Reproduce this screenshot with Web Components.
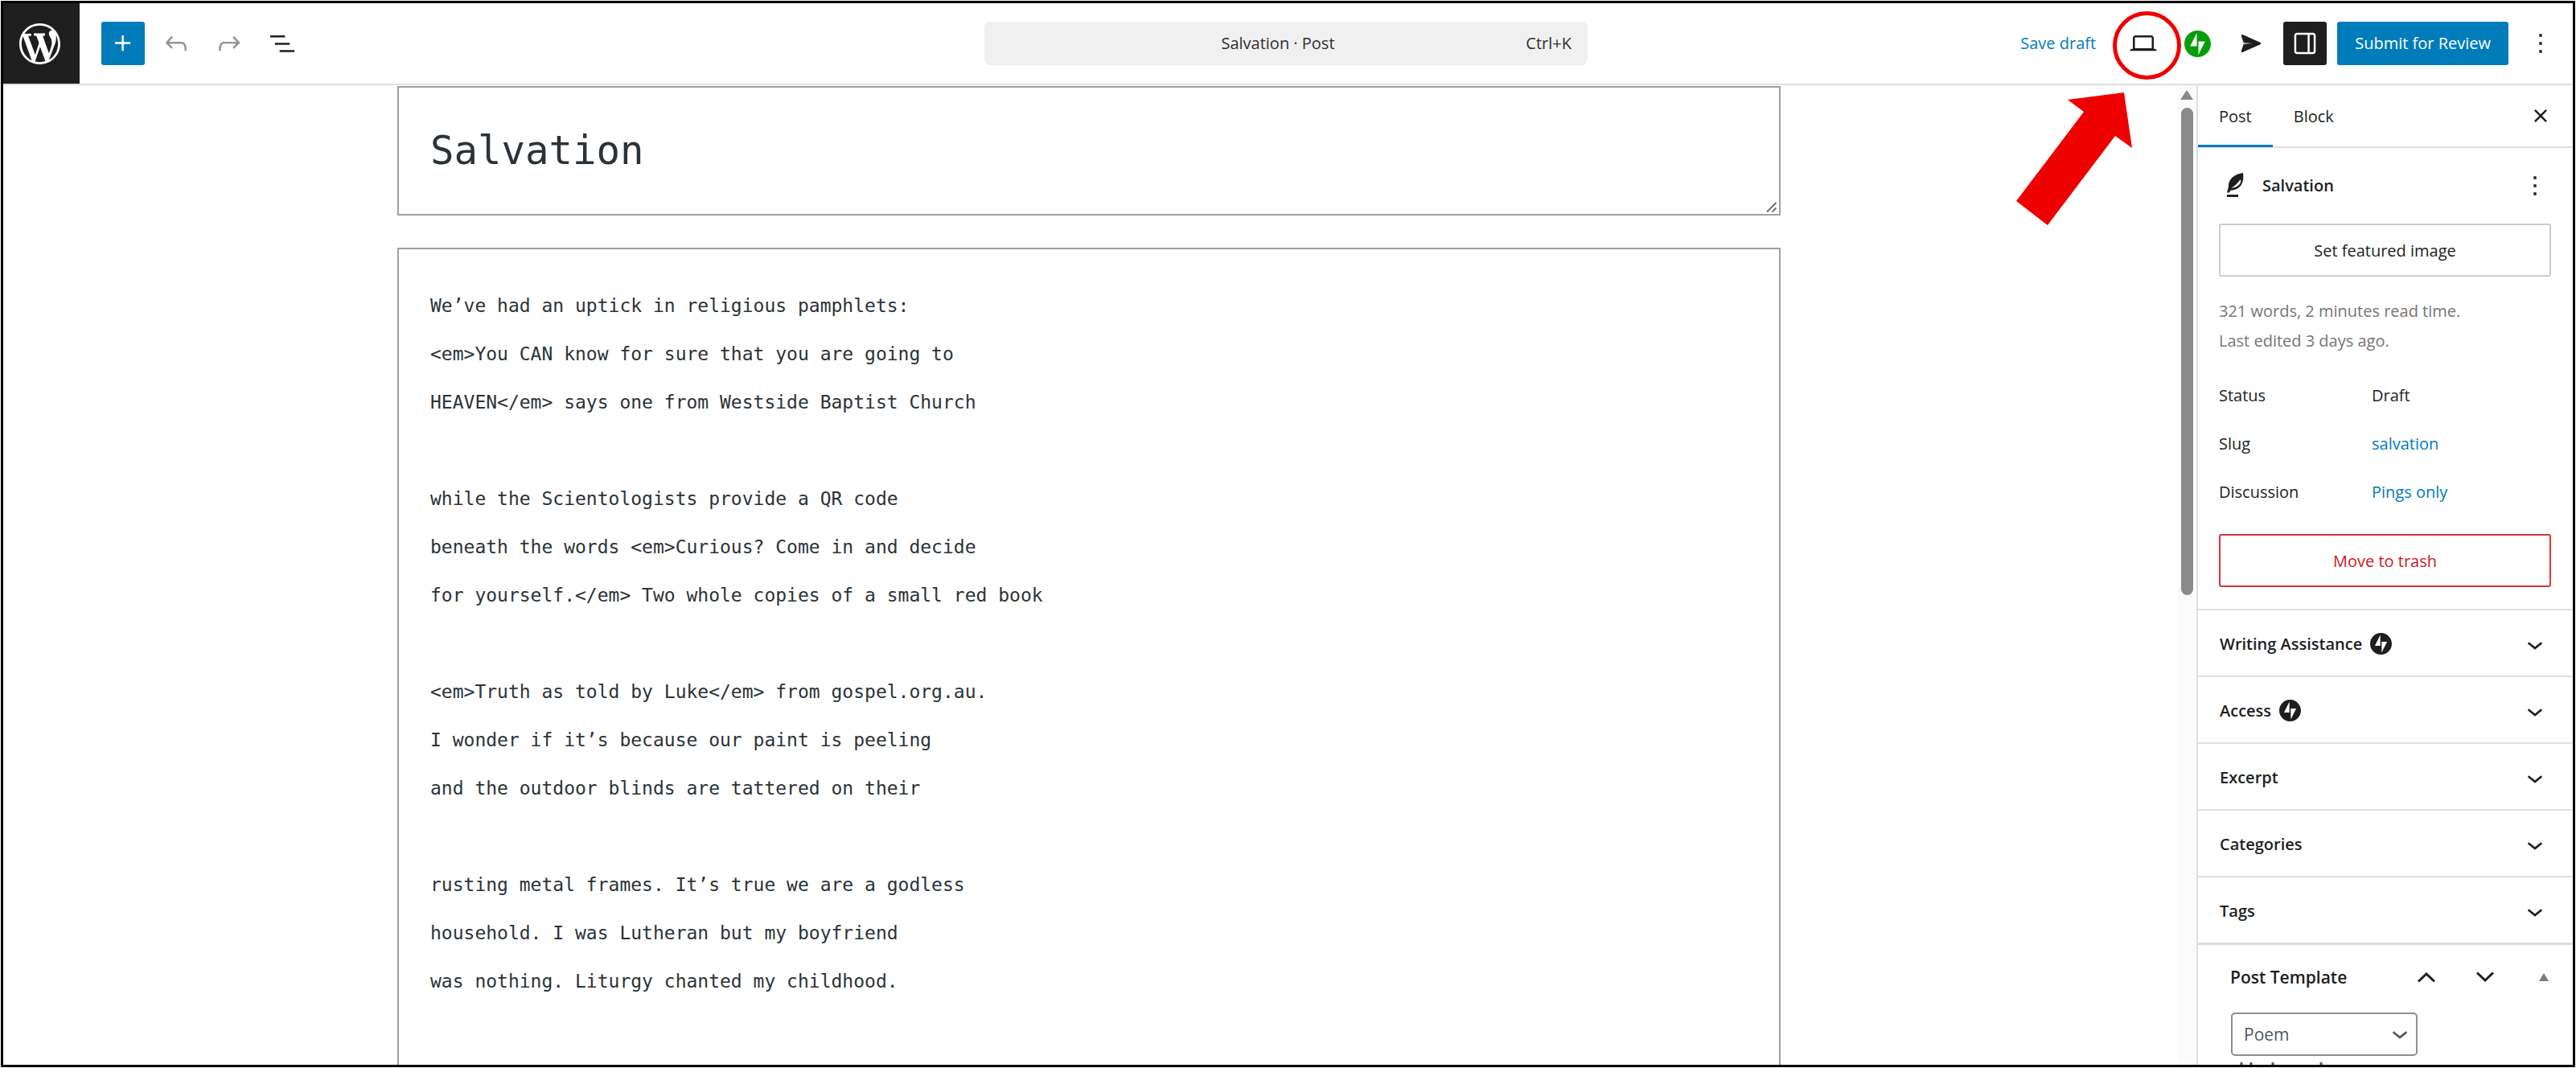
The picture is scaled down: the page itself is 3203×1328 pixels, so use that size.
<!DOCTYPE html>
<html lang="en">
<head>
<meta charset="utf-8">
<title>Salvation - Post</title>
<style>
	html, body {
		margin: 0;
		height: 100%;
		background: #fff;
	}

	body {
		box-sizing: border-box;
		padding: 1px;
		overflow: hidden;
		font-family: "Segoe UI", "Open Sans", "Noto Sans", sans-serif;
		font-size: 20px;
		line-height: 28px;
		color: #1e1e1e;
		--blue: #007cba;
		--line: #e0e0e0;
	}
</style>
</head>
<body>
<post-editor></post-editor>

<script>
const ICONS = {
	wordpress: ["0 0 20 20", `<path d="M20 10c0-5.51-4.49-10-10-10C4.48 0 0 4.49 0 10c0 5.52 4.48 10 10 10 5.51 0 10-4.48 10-10zM7.78 15.37L4.37 6.22c.55-.02 1.17-.08 1.17-.08.5-.06.44-1.13-.06-1.11 0 0-1.45.11-2.37.11-.18 0-.37 0-.58-.01C4.12 2.69 6.87 1.11 10 1.11c2.33 0 4.45.87 6.05 2.34-.68-.11-1.65.39-1.65 1.58 0 .74.45 1.36.9 2.1.35.61.55 1.36.55 2.46 0 1.49-1.4 5-1.4 5l-3.03-8.37c.54-.02.82-.17.82-.17.5-.05.44-1.25-.06-1.22 0 0-1.44.12-2.38.12-.87 0-2.33-.12-2.33-.12-.5-.03-.56 1.2-.06 1.22l.92.08 1.26 3.41zM17.41 10c.24-.64.74-1.87.43-4.25.7 1.29 1.05 2.71 1.05 4.25 0 3.29-1.73 6.24-4.4 7.78.97-2.59 1.94-5.2 2.92-7.78zM6.1 18.09C3.12 16.65 1.11 13.53 1.11 10c0-1.3.23-2.48.72-3.59C3.25 10.3 4.67 14.2 6.1 18.09zm4.03-6.63l2.58 6.98c-.86.29-1.76.45-2.71.45-.79 0-1.57-.11-2.29-.33.81-2.38 1.62-4.74 2.42-7.1z"/>`],
	plus: ["0 0 24 24", `<path d="M11 12.5V17.5H12.5V12.5H17.5V11H12.5V6H11V11H6V12.5H11Z"/>`],
	undo: ["0 0 24 24", `<path d="M18.3 11.7c-.6-.6-1.4-.9-2.3-.9H6.7l2.9-3.3-1.1-1-4.5 5L8.5 16l1-1-2.7-2.7H16c.5 0 .9.2 1.3.5 1 1 1 3.4 1 4.5v.3h1.5v-.2c0-1.5 0-4.3-1.5-5.7z"/>`],
	redo: ["0 0 24 24", `<path d="M15.6 6.5l-1.1 1 2.9 3.3H8c-.9 0-1.7.3-2.3.9-1.4 1.5-1.4 4.2-1.4 5.6v.2h1.5v-.3c0-1.1 0-3.5 1-4.5.3-.3.7-.5 1.3-.5h9.2L14.5 15l1.1 1.1 4.6-4.6-4.6-5z"/>`],
	list: ["0 0 24 24", `<path d="M3 6h11v1.5H3V6Zm3.5 5.5h11V13h-11v-1.5ZM21 17H10v1.5h11V17Z"/>`],
	desktop: ["0 0 24 24", `<path d="M20.5 16h-.7V8c0-1.1-.9-2-2-2H6.2c-1.1 0-2 .9-2 2v8h-.7c-.8 0-1.5.7-1.5 1.5h20c0-.8-.7-1.5-1.5-1.5zM5.7 8c0-.3.2-.5.5-.5h11.6c.3 0 .5.2.5.5v7.6H5.7V8z"/>`],
	jetpack: ["0 0 32 32", `<path d="M16 0C7.2 0 0 7.2 0 16s7.2 16 16 16 16-7.2 16-16S24.8 0 16 0zM15 19H7l8-16V19zM17 29V13h8L17 29z"/>`],
	send: ["0 0 24 24", `<defs><linearGradient id="g"><stop offset="0" stop-color="#bbb"/><stop offset="1" stop-color="#1e1e1e"/></linearGradient></defs><path d="M4.7 6.3Q4.6 5 6 5.5L18.8 11.2Q19.9 12 18.8 12.8L6 18.4Q4.6 19 4.7 17.7L6.6 12Z"/><path fill="url(#g)" d="M6.4 11.2L15 12L6.4 12.8Z"/>`],
	drawer: ["0 0 24 24", `<path d="M18 4H6c-1.1 0-2 .9-2 2v12c0 1.1.9 2 2 2h12c1.1 0 2-.9 2-2V6c0-1.1-.9-2-2-2zm-4 14.5H6c-.3 0-.5-.2-.5-.5V6c0-.3.2-.5.5-.5h8v13zm4.5-.5c0 .3-.2.5-.5.5h-2.5v-13H18c.3 0 .5.2.5.5v12z"/>`],
	more: ["0 0 24 24", `<path d="M13 19h-2v-2h2v2zm0-6h-2v-2h2v2zm0-6h-2V5h2v2z"/>`],
	close: ["0 0 24 24", `<path d="M12 13.06l3.712 3.713 1.061-1.06L13.061 12l3.712-3.712-1.06-1.06L12 10.938 8.288 7.227l-1.061 1.06L10.939 12l-3.712 3.712 1.06 1.061L12 13.061z"/>`],
	chevron: ["0 0 24 24", `<path d="M17.5 11.6L12 16l-5.5-4.4.9-1.2L12 14l4.5-3.6 1 1.2z"/>`],
	feather: ["0 0 40 40", `<path fill-rule="evenodd" d="M30 4C20 5 11 12 12 21L10 28.500H12.500L15 25.500C25 25.500 32 18 30 4ZM27 12C28.500 18 22 22.500 15.500 22.800C19 21 24 16 27 12Z"/><path d="M10 31h14v3H10z"/>`],
	up: ["0 0 24 14", `<path d="M2 12.500L12 3l10 9.500" fill="none" stroke="currentColor" stroke-width="3"/>`],
	down: ["0 0 24 14", `<path d="M2 1.500L12 11l10-9.500" fill="none" stroke="currentColor" stroke-width="3"/>`],
	triangle: ["0 0 14 12", `<path d="M7 1l6 10H1z"/>`],
	grip: ["0 0 14 14", `<path d="M1 12.500L12.500 1M7.500 12.500l5-5" fill="none" stroke="currentColor" stroke-width="2"/>`]
};

const POEM = `We’ve had an uptick in religious pamphlets:
<em>You CAN know for sure that you are going to
HEAVEN</em> says one from Westside Baptist Church

while the Scientologists provide a QR code
beneath the words <em>Curious? Come in and decide
for yourself.</em> Two whole copies of a small red book

<em>Truth as told by Luke</em> from gospel.org.au.
I wonder if it’s because our paint is peeling
and the outdoor blinds are tattered on their

rusting metal frames. It’s true we are a godless
household. I was Lutheran but my boyfriend
was nothing. Liturgy chanted my childhood.`;

class WpIcon extends HTMLElement {
	constructor() {
		super();
		this.attachShadow({ mode: "open" });
	}

	connectedCallback() {
		const [viewBox, shape] = ICONS[this.getAttribute("name")];
		this.shadowRoot.innerHTML = `
			<style>
				:host { display: block; width: 40px; height: 40px; flex: none; }
				svg { display: block; width: 100%; height: 100%; fill: currentColor; }
			</style>
			<svg viewBox="${viewBox}" aria-hidden="true">${shape}</svg>
		`;
	}
}

class IconButton extends HTMLElement {
	constructor() {
		super();
		this.attachShadow({ mode: "open" });
	}

	connectedCallback() {
		this.shadowRoot.innerHTML = `
			<style>
				:host { display: block; flex: none; }
				button {
					display: flex;
					align-items: center;
					justify-content: center;
					width: 54px;
					height: 54px;
					padding: 0;
					border: 0;
					border-radius: 3px;
					background: none;
					color: inherit;
				}
				:host([variant="primary"]) button { background: var(--blue); color: #fff; }
				:host([variant="pressed"]) button { background: #1e1e1e; color: #fff; }
				:host([disabled]) button { color: #949494; }
				:host([variant="brand"]) wp-icon { width: 33px; height: 33px; color: #069e08; }
				:host([variant="compact"]) button { width: 40px; }
				:host([variant="order"]) button { width: 73px; }
				:host([variant="order"]) wp-icon { width: 24px; height: 14px; }
				:host([variant="toggle"]) button { width: 73px; color: #787c82; }
				:host([variant="toggle"]) wp-icon { width: 14px; height: 12px; }
			</style>
			<button type="button" aria-label="${this.getAttribute("label")}"${this.hasAttribute("disabled") ? " disabled" : ""}>
				<wp-icon name="${this.getAttribute("icon")}"></wp-icon>
			</button>
		`;
	}
}

class EditorHeader extends HTMLElement {
	constructor() {
		super();
		this.attachShadow({ mode: "open" });
		this.shadowRoot.innerHTML = `
			<style>
				:host {
					display: grid;
					grid-template-columns: 1fr 750px 1fr;
					align-items: center;
					height: 100px;
					padding-right: 5px;
					border-bottom: 2px solid var(--line);
				}
				.left, .right { display: flex; align-items: center; }
				.left { gap: 12px; }
				.right { gap: 13px; justify-content: flex-end; padding-right: 8px; }
				.logo {
					display: flex;
					align-items: center;
					box-sizing: border-box;
					width: 95px;
					height: 100px;
					margin-right: 15px;
					padding-left: 20px;
					background: #1e1e1e;
					color: #fff;
				}
				.logo wp-icon { width: 51px; height: 51px; }
				button { font: inherit; border: 0; height: 54px; }
				.command {
					display: grid;
					grid-template-columns: 1fr auto 1fr;
					align-items: center;
					padding: 0 20px 0 0;
					border-radius: 7px;
					background: #f0f0f0;
					color: #2f2f2f;
				}
				.command .title { grid-column: 2; }
				.command .keys { text-align: right; }
				.save { padding: 0 19px; background: none; color: var(--blue); }
				.submit {
					padding: 0 22px;
					border-radius: 3px;
					background: var(--blue);
					color: #fff;
				}
			</style>
			<div class="left">
				<a class="logo" href="#" aria-label="View Posts"><wp-icon name="wordpress"></wp-icon></a>
				<icon-button icon="plus" label="Toggle block inserter" variant="primary"></icon-button>
				<icon-button icon="undo" label="Undo" disabled></icon-button>
				<icon-button icon="redo" label="Redo" disabled></icon-button>
				<icon-button icon="list" label="Document Overview"></icon-button>
			</div>
			<button class="command" type="button">
				<span class="title">Salvation · Post</span>
				<span class="keys">Ctrl+K</span>
			</button>
			<div class="right">
				<button class="save" type="button">Save draft</button>
				<icon-button icon="desktop" label="View"></icon-button>
				<icon-button icon="jetpack" label="Jetpack" variant="brand"></icon-button>
				<icon-button icon="send" label="Newsletter"></icon-button>
				<icon-button icon="drawer" label="Settings" variant="pressed"></icon-button>
				<button class="submit" type="button">Submit for Review</button>
				<icon-button icon="more" label="Options"></icon-button>
			</div>
		`;
	}
}

class CodeCanvas extends HTMLElement {
	constructor() {
		super();
		this.attachShadow({ mode: "open" });
		this.shadowRoot.innerHTML = `
			<style>
				:host { display: flex; flex: 1; min-width: 0; overflow: hidden; }
				.page { flex: 1; min-width: 0; padding: 1px 3px 0 0; }
				.column {
					display: flex;
					flex-direction: column;
					gap: 40px;
					max-width: 1720px;
					margin: 0 auto;
				}
				.field { position: relative; display: flex; }
				textarea {
					box-sizing: border-box;
					width: 100%;
					margin: 0;
					padding: 40px 39px;
					border: 2px solid #a0a0a0;
					border-radius: 0;
					resize: none;
					overflow: hidden;
					outline: none;
					background: #fff;
					color: #2c3338;
					font-family: Consolas, "DejaVu Sans Mono", monospace;
				}
				.title { height: 161px; font-size: 49px; line-height: 78px; }
				.body { font-size: 23px; line-height: 60px; }
				wp-icon {
					position: absolute;
					right: 4px;
					bottom: 3px;
					width: 14px;
					height: 14px;
					color: #707070;
				}
				.scrollbar {
					display: flex;
					flex-direction: column;
					align-items: center;
					gap: 10px;
					width: 24px;
					padding-top: 6px;
					background: #fbfbfb;
				}
				.arrow {
					width: 16px;
					height: 12px;
					background: #8a8a8a;
					clip-path: polygon(50% 0, 100% 100%, 0 100%);
				}
				.thumb { width: 15px; height: 50%; border-radius: 8px; background: #8a8a8a; }
			</style>
			<div class="page">
				<div class="column">
					<div class="field">
						<textarea class="title" rows="1" aria-label="Add title"></textarea>
						<wp-icon name="grip"></wp-icon>
					</div>
					<div class="field">
						<textarea class="body" rows="18" spellcheck="false" aria-label="Type text or HTML"></textarea>
					</div>
				</div>
			</div>
			<div class="scrollbar"><div class="arrow"></div><div class="thumb"></div></div>
		`;
		this.shadowRoot.querySelector(".title").textContent = "Salvation";
		this.shadowRoot.querySelector(".body").textContent = POEM;
	}
}

class PanelRow extends HTMLElement {
	constructor() {
		super();
		this.attachShadow({ mode: "open" });
	}

	connectedCallback() {
		this.shadowRoot.innerHTML = `
			<style>
				:host { display: block; border-top: 2px solid var(--line); }
				button {
					display: flex;
					align-items: center;
					gap: 10px;
					width: 100%;
					height: 81px;
					padding: 2px 27px 0;
					border: 0;
					background: none;
					color: inherit;
					font: inherit;
					font-weight: 600;
				}
				.badge { width: 27px; height: 27px; }
				.chevron { margin-left: auto; }
			</style>
			<button type="button" aria-expanded="false">
				<slot></slot>
				${this.hasAttribute("jetpack") ? `<wp-icon class="badge" name="jetpack"></wp-icon>` : ""}
				<wp-icon class="chevron" name="chevron"></wp-icon>
			</button>
		`;
	}
}

class SummaryRow extends HTMLElement {
	constructor() {
		super();
		this.attachShadow({ mode: "open" });
		this.shadowRoot.innerHTML = `
			<style>
				:host { display: grid; grid-template-columns: 190px 1fr; align-items: center; height: 54px; }
				::slotted(a) { color: var(--blue); text-decoration: none; }
			</style>
			<slot name="label"></slot>
			<slot></slot>
		`;
	}
}

class SettingsSidebar extends HTMLElement {
	constructor() {
		super();
		this.attachShadow({ mode: "open" });
		this.shadowRoot.innerHTML = `
			<style>
				:host {
					display: block;
					box-sizing: border-box;
					flex: none;
					width: 468px;
					border-left: 2px solid var(--line);
					overflow: hidden;
				}
				button { font: inherit; color: inherit; background: none; border: 0; }
				.tabs {
					display: flex;
					align-items: center;
					height: 76px;
					padding-right: 13px;
					border-bottom: 2px solid var(--line);
				}
				.tabs button { height: 78px; padding: 2px 26px 0; }
				.tabs .active { box-shadow: inset 0 -3px 0 var(--blue); }
				.tabs icon-button { margin-left: auto; }
				.summary { display: flex; flex-direction: column; padding: 20px 27px 27px 26px; }
				.heading { display: flex; align-items: center; gap: 14px; height: 54px; font-weight: 600; }
				.heading icon-button { margin-left: auto; }
				.wide { height: 66px; padding-top: 3px; border-radius: 3px; }
				.image { margin-top: 20px; border: 2px solid #ccc; }
				.trash { margin-top: 25px; border: 2px solid #d63638; color: #cc1818; }
				.info { margin: 24px 0 23px; color: #757575; line-height: 37px; }
				.rows { display: flex; flex-direction: column; gap: 6px; }
				.metabox { border-top: 3px solid #dcdcdc; }
				.metabox header { display: flex; align-items: center; height: 80px; padding-left: 40px; }
				h2 { flex: 1; margin: 0; font-size: 21px; font-weight: 600; }
				.select { position: relative; width: 232px; margin: 4px 0 0 41px; }
				select {
					appearance: none;
					box-sizing: border-box;
					width: 100%;
					height: 54px;
					padding: 0 14px;
					border: 2px solid #8c8f94;
					border-radius: 5px;
					background: #fff;
					color: #50575e;
					font: inherit;
					font-size: 21px;
				}
				.select wp-icon { position: absolute; right: 2px; top: 6px; color: #50575e; pointer-events: none; }
				.cut { display: block; margin: 8px 0 0 51px; }
			</style>
			<div class="tabs">
				<button class="active" type="button">Post</button>
				<button type="button">Block</button>
				<icon-button icon="close" label="Close Settings"></icon-button>
			</div>
			<div class="summary">
				<div class="heading">
					<wp-icon name="feather"></wp-icon>
					<span>Salvation</span>
					<icon-button icon="more" label="Actions" variant="compact"></icon-button>
				</div>
				<button class="wide image" type="button">Set featured image</button>
				<div class="info">321 words, 2 minutes read time.<br>Last edited 3 days ago.</div>
				<div class="rows">
					<summary-row><span slot="label">Status</span><span>Draft</span></summary-row>
					<summary-row><span slot="label">Slug</span><a href="#">salvation</a></summary-row>
					<summary-row><span slot="label">Discussion</span><a href="#">Pings only</a></summary-row>
				</div>
				<button class="wide trash" type="button">Move to trash</button>
			</div>
			<panel-row jetpack>Writing Assistance</panel-row>
			<panel-row jetpack>Access</panel-row>
			<panel-row>Excerpt</panel-row>
			<panel-row>Categories</panel-row>
			<panel-row>Tags</panel-row>
			<div class="metabox">
				<header>
					<h2>Post Template</h2>
					<icon-button icon="up" label="Move up" variant="order"></icon-button>
					<icon-button icon="down" label="Move down" variant="order"></icon-button>
					<icon-button icon="triangle" label="Toggle panel" variant="toggle"></icon-button>
				</header>
				<div class="select">
					<select aria-label="Post Template"><option>Poem</option></select>
					<wp-icon name="chevron"></wp-icon>
				</div>
				<!-- tops of the ascenders in the line below the fold -->
				<svg class="cut" width="110" height="20" stroke="#50575e" stroke-width="3"><path d="M3 0v16M15 0v16M42 0v16M102 0v16"/></svg>
			</div>
		`;
	}
}

class PreviewCallout extends HTMLElement {
	constructor() {
		super();
		this.attachShadow({ mode: "open" });
		this.shadowRoot.innerHTML = `
			<style>
				:host { display: block; position: absolute; top: 6px; right: 484px; pointer-events: none; }
				svg { display: block; }
			</style>
			<svg width="215" height="275" viewBox="2500 10 215 275" aria-hidden="true">
				<circle cx="2669.500" cy="56.500" r="40" fill="none" stroke="#ee0000" stroke-width="5"/>
				<path fill="#ee0000" d="M2641 115L2571 124L2591 139L2507 250L2546 280L2630 169L2651 184Z"/>
			</svg>
		`;
	}
}

class PostEditor extends HTMLElement {
	constructor() {
		super();
		this.attachShadow({ mode: "open" });
		this.shadowRoot.innerHTML = `
			<style>
				:host {
					position: relative;
					display: flex;
					flex-direction: column;
					box-sizing: border-box;
					height: 100%;
					border: 3px solid #000;
					overflow: hidden;
				}
				main { display: flex; flex: 1; min-height: 0; }
			</style>
			<editor-header></editor-header>
			<main>
				<code-canvas></code-canvas>
				<settings-sidebar></settings-sidebar>
			</main>
			<preview-callout></preview-callout>
		`;
	}
}

customElements.define("wp-icon", WpIcon);
customElements.define("icon-button", IconButton);
customElements.define("editor-header", EditorHeader);
customElements.define("code-canvas", CodeCanvas);
customElements.define("panel-row", PanelRow);
customElements.define("summary-row", SummaryRow);
customElements.define("settings-sidebar", SettingsSidebar);
customElements.define("preview-callout", PreviewCallout);
customElements.define("post-editor", PostEditor);
</script>
</body>
</html>
